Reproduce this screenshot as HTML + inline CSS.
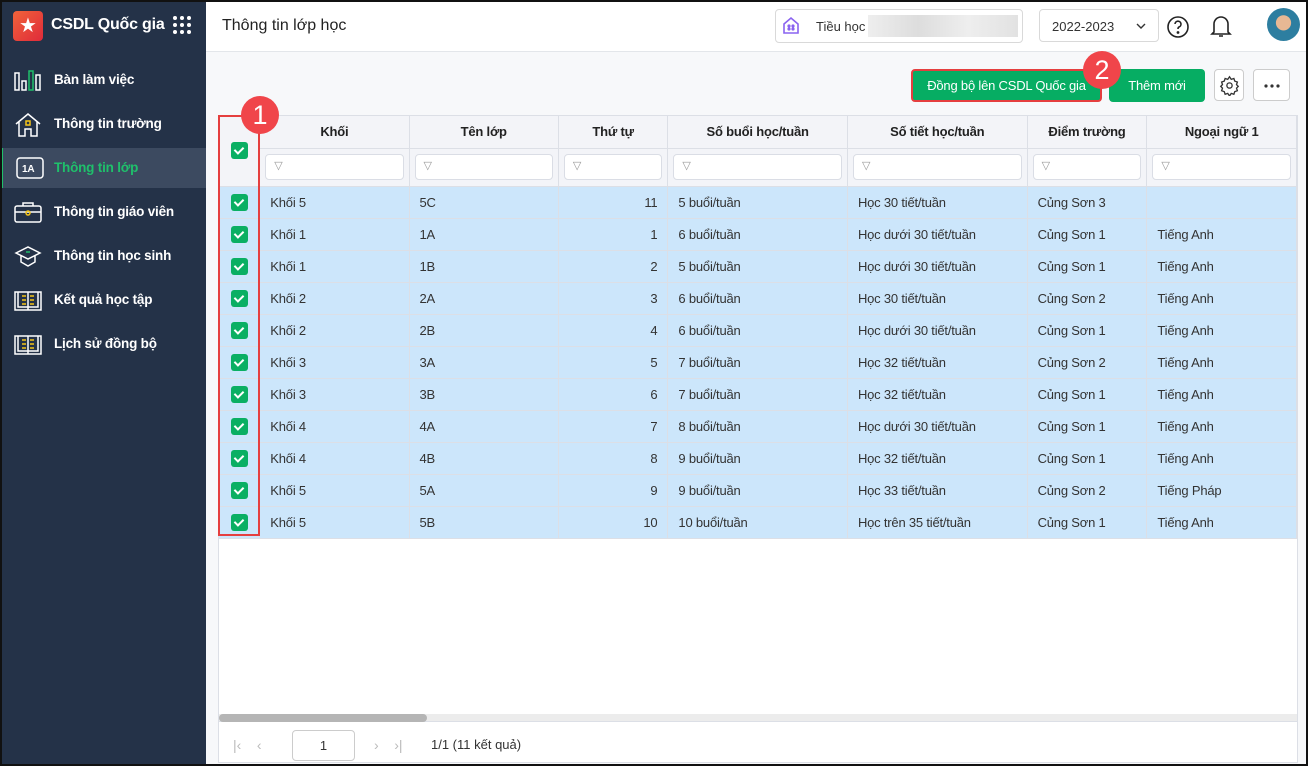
<!DOCTYPE html>
<html><head><meta charset="utf-8"><style>
*{box-sizing:border-box;margin:0;padding:0}
body{width:1308px;height:766px;overflow:hidden;font-family:"Liberation Sans",sans-serif;background:#fff;position:relative;font-size:13px;color:#333}
.frame{position:absolute;inset:0;border:2px solid #111;z-index:50;pointer-events:none}
.side{position:absolute;left:0;top:0;width:206px;height:766px;background:#243248;color:#fff}
.logo{position:absolute;left:13px;top:11px;width:30px;height:30px;border-radius:4px;background:linear-gradient(135deg,#f0633a,#e02a3a);color:#fff;font-size:20px;text-align:center;line-height:30px}
.brand{position:absolute;left:51px;top:16px;font-size:16px;font-weight:bold;letter-spacing:-0.2px}
.grid{position:absolute;left:173px;top:16px;width:18px;height:18px;display:grid;grid-template-columns:repeat(3,4px);gap:3px}
.grid i{width:4px;height:4px;border-radius:2px;background:#fff;display:block}
.nav{position:absolute;left:0;width:206px;height:40px;font-weight:bold;font-size:13.5px;line-height:40px;padding-left:54px;letter-spacing:-0.2px}
.nav.act{background:#3c4a60;color:#1fc06b;border-left:3px solid #1fc06b}
.nav svg{position:absolute;left:14px;top:9px}
.hdr{position:absolute;left:206px;top:0;right:0;height:52px;background:#fff;border-bottom:1px solid #e3e6ea}
.title{position:absolute;left:16px;top:17px;font-size:16px;color:#222}
.main{position:absolute;left:206px;top:52px;right:0;bottom:0;background:#f7f8fa}
.school{position:absolute;left:775px;top:9px;width:248px;height:34px;border:1px solid #d9d9d9;border-radius:4px;background:#fff}
.year{position:absolute;left:1039px;top:9px;width:120px;height:33px;border:1px solid #d9d9d9;border-radius:4px;background:#fff;font-size:13px;padding:9px 12px}
.btn{position:absolute;top:69px;height:33px;border-radius:4px;font-size:13px;line-height:33px;text-align:center;color:#fff;background:#06ad63;letter-spacing:-0.2px}
.ib{position:absolute;top:69px;height:32px;border:1px solid #ccc;border-radius:4px;background:#fff}
.badge{position:absolute;width:38px;height:38px;border-radius:50%;background:#f0454a;color:#fff;font-size:27px;text-align:center;line-height:38px;z-index:20}
.tbl{position:absolute;left:218px;top:115px;width:1080px;height:648px;background:#fff;border:1px solid #dcdfe6}
table{border-collapse:collapse;table-layout:fixed;position:absolute;left:0;top:0}
td,th{border-right:1px solid #dcdfe6;border-bottom:1px solid #dcdfe6;height:32px;font-size:13px;padding:0 10px;white-space:nowrap;overflow:hidden;letter-spacing:-0.2px}
th{background:#f3f4f8;font-weight:bold;color:#222;height:32px}
tr.f td{background:#f3f4f8;height:38px;padding:0 5px}
.fi{height:26px;border:1px solid #dadde5;border-radius:4px;background:#fff;font-size:11px;color:#999;padding:4px 8px}
tbody tr.d td{background:#cce6fb}
.cb{width:17px;height:17px;border-radius:3px;background:#0aaf63;display:inline-block;position:relative;vertical-align:middle}
.cb:after{content:"";position:absolute;left:5px;top:3px;width:4px;height:7px;border:solid #fff;border-width:0 2px 2px 0;transform:rotate(45deg)}
td.c{padding:0;text-align:center}
.r{text-align:right}
</style></head><body>
<div class="side">
<div class="logo">★</div><div class="brand">CSDL Quốc gia</div>
<div class="grid"><i></i><i></i><i></i><i></i><i></i><i></i><i></i><i></i><i></i></div>
<div class="nav" style="top:60px"><svg width="28" height="22" viewBox="0 0 28 22" fill="none" stroke="#fff" stroke-width="1.5"><rect x="1" y="4" width="4" height="17"/><rect x="8" y="12" width="4" height="9"/><rect x="15" y="2" width="4" height="19" stroke="#1fc06b"/><rect x="22" y="6" width="4" height="15"/></svg>Bàn làm việc</div>
<div class="nav" style="top:104px"><svg width="28" height="24" viewBox="0 0 28 24" fill="none" stroke="#fff" stroke-width="1.5"><path d="M2 11 14 1 26 11M5 9v14h6v-7h6v7h6V9"/><rect x="12" y="8" width="4" height="4" stroke="#f5c518"/></svg>Thông tin trường</div>
<div class="nav act" style="top:148px;padding-left:51px"><svg style="left:13px" width="28" height="22" viewBox="0 0 28 22" fill="none" stroke="#fff" stroke-width="1.5"><rect x="1" y="1" width="26" height="20" rx="3"/><text x="6" y="15" fill="#fff" stroke="none" font-size="10" font-family="Liberation Sans">1A</text></svg>Thông tin lớp</div>
<div class="nav" style="top:192px"><svg width="28" height="22" viewBox="0 0 28 22" fill="none" stroke="#fff" stroke-width="1.5"><rect x="1" y="5" width="26" height="16" rx="2"/><path d="M9 5V2h10v3M1 11h26"/><circle cx="14" cy="12" r="2" stroke="#f5c518"/></svg>Thông tin giáo viên</div>
<div class="nav" style="top:236px"><svg width="28" height="22" viewBox="0 0 28 22" fill="none" stroke="#fff" stroke-width="1.5"><path d="M2 8 14 2 26 8 14 14Z M7 11v6l7 4 7-4v-6"/><path d="M12 7h4" stroke="#1fc06b"/></svg>Thông tin học sinh</div>
<div class="nav" style="top:280px"><svg width="28" height="22" viewBox="0 0 28 22" fill="none" stroke="#fff" stroke-width="1.5"><path d="M1 3h26v18H1Z M14 3v18M4 3v15h20V3"/><path d="M8 7h4M8 11h4M8 15h4M16 7h4M16 11h4M16 15h4" stroke="#f5c518"/></svg>Kết quả học tập</div>
<div class="nav" style="top:324px"><svg width="28" height="22" viewBox="0 0 28 22" fill="none" stroke="#fff" stroke-width="1.5"><path d="M1 3h26v18H1Z M14 3v18M4 3v15h20V3"/><path d="M8 7h4M8 11h4M8 15h4M16 7h4M16 11h4M16 15h4" stroke="#f5c518"/></svg>Lịch sử đồng bộ</div>
</div>
<div class="hdr"><div class="title">Thông tin lớp học</div></div>
<div class="school"><svg style="position:absolute;left:5px;top:6px" width="20" height="20" viewBox="0 0 20 20" fill="none" stroke="#8a63f0" stroke-width="1.6"><path d="M3 8 10 2 17 8v9H3Z"/><circle cx="8" cy="10" r=".8" fill="#8a63f0"/><circle cx="12" cy="10" r=".8" fill="#8a63f0"/><circle cx="8" cy="13" r=".8" fill="#8a63f0"/><circle cx="12" cy="13" r=".8" fill="#8a63f0"/></svg><span style="position:absolute;left:40px;top:9px">Tiều học</span><div style="position:absolute;left:92px;top:5px;width:150px;height:22px;background:linear-gradient(90deg,#eee,#ddd,#eee,#e2e2e2)"></div></div>
<div class="year">2022-2023<svg style="position:absolute;right:12px;top:13px" width="10" height="6" viewBox="0 0 10 6" fill="none" stroke="#333" stroke-width="1.4"><path d="M1 1l4 4 4-4"/></svg></div>
<svg style="position:absolute;left:1166px;top:15px" width="24" height="24" viewBox="0 0 24 24" fill="none" stroke="#222" stroke-width="1.6"><circle cx="12" cy="12" r="10"/><path d="M9 9a3 3 0 1 1 4 3c-1 .4-1 1-1 2"/><circle cx="12" cy="17.5" r=".6" fill="#222"/></svg>
<svg style="position:absolute;left:1209px;top:13px" width="24" height="26" viewBox="0 0 24 26" fill="none" stroke="#222" stroke-width="1.6"><path d="M5 19V11a7 7 0 0 1 14 0v8l2 2H3Z M10 23h4"/></svg>
<div style="position:absolute;left:1267px;top:8px;width:33px;height:33px;border-radius:50%;background:radial-gradient(circle at 50% 45%,#e8b894 30%,#2d7ea0 32%)"></div>
<div class="main"></div>
<div class="btn" style="left:911px;width:191px;border:2px solid #e53f3f;line-height:29px">Đồng bộ lên CSDL Quốc gia</div>
<div class="btn" style="left:1109px;width:96px">Thêm mới</div>
<div class="ib" style="left:1214px;width:30px"><svg style="position:absolute;left:4px;top:5px" width="21" height="21" viewBox="0 0 24 24" fill="none" stroke="#333" stroke-width="1.5"><circle cx="12" cy="12" r="3"/><path d="M12 2l2 3 3-1 1 3 3 1-1 3 2 2-2 2 1 3-3 1-1 3-3-1-2 3-2-3-3 1-1-3-3-1 1-3-2-2 2-2-1-3 3-1 1-3 3 1Z"/></svg></div>
<div class="ib" style="left:1253px;width:37px"><svg style="position:absolute;left:10px;top:14px" width="16" height="4" viewBox="0 0 16 4" fill="#333"><circle cx="2" cy="2" r="1.6"/><circle cx="8" cy="2" r="1.6"/><circle cx="14" cy="2" r="1.6"/></svg></div>
<div class="badge" style="left:241px;top:96px">1</div>
<div class="badge" style="left:1083px;top:51px">2</div>
<div style="position:absolute;left:218px;top:115px;width:42px;height:421px;border:2px solid #e53f3f;z-index:15"></div>
<div class="tbl">
<table>
<colgroup><col style="width:41px"><col style="width:150px"><col style="width:150px"><col style="width:110px"><col style="width:180px"><col style="width:180px"><col style="width:120px"><col style="width:150px"></colgroup>
<tr><th rowspan="2" style="padding:0;text-align:center"><span class="cb"></span></th><th>Khối</th><th>Tên lớp</th><th>Thứ tự</th><th>Số buổi học/tuần</th><th>Số tiết học/tuần</th><th>Điểm trường</th><th>Ngoại ngữ 1</th></tr>
<tr class="f"><td><div class="fi">▽</div></td><td><div class="fi">▽</div></td><td><div class="fi">▽</div></td><td><div class="fi">▽</div></td><td><div class="fi">▽</div></td><td><div class="fi">▽</div></td><td><div class="fi">▽</div></td></tr>
<tr class="d"><td class="c"><span class="cb"></span></td><td>Khối 5</td><td>5C</td><td class="r">11</td><td>5 buổi/tuần</td><td>Học 30 tiết/tuần</td><td>Củng Sơn 3</td><td></td></tr>
<tr class="d"><td class="c"><span class="cb"></span></td><td>Khối 1</td><td>1A</td><td class="r">1</td><td>6 buổi/tuần</td><td>Học dưới 30 tiết/tuần</td><td>Củng Sơn 1</td><td>Tiếng Anh</td></tr>
<tr class="d"><td class="c"><span class="cb"></span></td><td>Khối 1</td><td>1B</td><td class="r">2</td><td>5 buổi/tuần</td><td>Học dưới 30 tiết/tuần</td><td>Củng Sơn 1</td><td>Tiếng Anh</td></tr>
<tr class="d"><td class="c"><span class="cb"></span></td><td>Khối 2</td><td>2A</td><td class="r">3</td><td>6 buổi/tuần</td><td>Học 30 tiết/tuần</td><td>Củng Sơn 2</td><td>Tiếng Anh</td></tr>
<tr class="d"><td class="c"><span class="cb"></span></td><td>Khối 2</td><td>2B</td><td class="r">4</td><td>6 buổi/tuần</td><td>Học dưới 30 tiết/tuần</td><td>Củng Sơn 1</td><td>Tiếng Anh</td></tr>
<tr class="d"><td class="c"><span class="cb"></span></td><td>Khối 3</td><td>3A</td><td class="r">5</td><td>7 buổi/tuần</td><td>Học 32 tiết/tuần</td><td>Củng Sơn 2</td><td>Tiếng Anh</td></tr>
<tr class="d"><td class="c"><span class="cb"></span></td><td>Khối 3</td><td>3B</td><td class="r">6</td><td>7 buổi/tuần</td><td>Học 32 tiết/tuần</td><td>Củng Sơn 1</td><td>Tiếng Anh</td></tr>
<tr class="d"><td class="c"><span class="cb"></span></td><td>Khối 4</td><td>4A</td><td class="r">7</td><td>8 buổi/tuần</td><td>Học dưới 30 tiết/tuần</td><td>Củng Sơn 1</td><td>Tiếng Anh</td></tr>
<tr class="d"><td class="c"><span class="cb"></span></td><td>Khối 4</td><td>4B</td><td class="r">8</td><td>9 buổi/tuần</td><td>Học 32 tiết/tuần</td><td>Củng Sơn 1</td><td>Tiếng Anh</td></tr>
<tr class="d"><td class="c"><span class="cb"></span></td><td>Khối 5</td><td>5A</td><td class="r">9</td><td>9 buổi/tuần</td><td>Học 33 tiết/tuần</td><td>Củng Sơn 2</td><td>Tiếng Pháp</td></tr>
<tr class="d"><td class="c"><span class="cb"></span></td><td>Khối 5</td><td>5B</td><td class="r">10</td><td>10 buổi/tuần</td><td>Học trên 35 tiết/tuần</td><td>Củng Sơn 1</td><td>Tiếng Anh</td></tr>
</table>
<div style="position:absolute;left:0;right:0;top:598px;height:8px;background:#ececec;border-bottom:1px solid #dcdfe6"><div style="width:208px;height:8px;border-radius:4px;background:#b5b5b5"></div></div>
<div style="position:absolute;left:14px;top:621px;color:#bbb;font-size:14px">|‹&nbsp;&nbsp;&nbsp;&nbsp;‹</div>
<div style="position:absolute;left:73px;top:614px;width:63px;height:31px;border:1px solid #ccc;border-radius:4px;text-align:center;line-height:29px">1</div>
<div style="position:absolute;left:155px;top:621px;color:#bbb;font-size:14px">›&nbsp;&nbsp;&nbsp;&nbsp;›|</div>
<div style="position:absolute;left:212px;top:621px;color:#333">1/1 (11 kết quả)</div>
</div>
<div class="frame"></div>
</body></html>
